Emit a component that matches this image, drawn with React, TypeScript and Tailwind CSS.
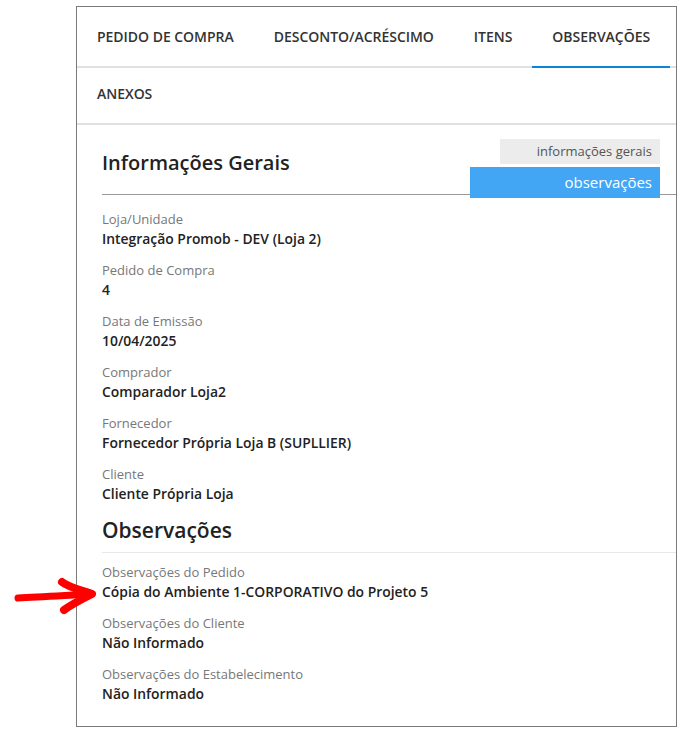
import type { ReactNode } from "react";

const TABS = [
  { label: "PEDIDO DE COMPRA", active: false },
  { label: "DESCONTO/ACRÉSCIMO", active: false },
  { label: "ITENS", active: false },
  { label: "OBSERVAÇÕES", active: true },
];

const GENERAL = [
  { label: "Loja/Unidade", value: "Integração Promob - DEV (Loja 2)" },
  { label: "Pedido de Compra", value: "4" },
  { label: "Data de Emissão", value: "10/04/2025" },
  { label: "Comprador", value: "Comparador Loja2" },
  { label: "Fornecedor", value: "Fornecedor Própria Loja B (SUPLLIER)" },
  { label: "Cliente", value: "Cliente Própria Loja" },
];

const NOTES = [
  { label: "Observações do Pedido", value: "Cópia do Ambiente 1-CORPORATIVO do Projeto 5" },
  { label: "Observações do Cliente", value: "Não Informado" },
  { label: "Observações do Estabelecimento", value: "Não Informado" },
];

function Tab({ children, active }: { children: ReactNode; active?: boolean }) {
  return (
    <button
      type="button"
      className={
        active
          ? "relative -mb-[2px] border-b-2 border-[#0a84d6] px-5 text-[14px] tracking-[-0.03px] font-semibold text-[#333]"
          : "px-5 text-[14px] tracking-[-0.03px] font-semibold text-[#333]"
      }
    >
      {children}
    </button>
  );
}

function Field({ label, value }: { label: string; value: string }) {
  return (
    <div className="mb-[13px] flex flex-col">
      <span className="text-[13px] leading-[19px] text-[#777]">{label}</span>
      <span className="text-[13.9px] leading-[19px] font-semibold text-[#222]">{value}</span>
    </div>
  );
}

function Arrow() {
  return (
    <svg
      className="pointer-events-none absolute left-[12px] top-[577px]"
      width="90"
      height="40"
      viewBox="0 0 90 40"
      fill="none"
    >
      <path d="M6 21 C 30 20, 60 18, 80 17" stroke="#ff0000" strokeWidth="7" strokeLinecap="round" />
      <path
        d="M50 5 C 56 10, 68 13, 80 17 C 70 22, 60 27, 52 33"
        stroke="#ff0000"
        strokeWidth="8"
        strokeLinecap="round"
        strokeLinejoin="round"
      />
    </svg>
  );
}

export default function App() {
  return (
    <div className="relative min-h-[730px] bg-white pt-[6px] font-['Open_Sans',sans-serif]">
      <div className="ml-[76px] flex h-[721px] w-[601px] flex-col border border-[#7a7a7a] bg-white">
        <div className="flex h-[61px] border-b-2 border-[#e0e0e0]">
          {TABS.map((t) => (
            <Tab key={t.label} active={t.active}>
              {t.label}
            </Tab>
          ))}
        </div>
        <div className="flex h-[57px] border-b-2 border-[#e0e0e0] pb-[4px]">
          <Tab>ANEXOS</Tab>
        </div>

        <div className="relative flex-1 pl-[25px]">
          <div className="absolute right-[16px] top-[14px] flex flex-col items-end gap-[3px]">
            <button
              type="button"
              className="h-[25px] w-[160px] bg-[#ececec] pr-[8px] text-right text-[13px] text-[#555]"
            >
              informações gerais
            </button>
            <button
              type="button"
              className="h-[31px] w-[190px] bg-[#42a6f5] pr-[8px] text-right text-[15px] text-white"
            >
              observações
            </button>
          </div>

          <h2 className="mt-[24px] text-[20px] leading-[28px] font-semibold text-[#222]">Informações Gerais</h2>
          <div className="mt-[17px] mb-[15px] border-b border-[#999]" />
          {GENERAL.map((f) => (
            <Field key={f.label} {...f} />
          ))}

          <h2 className="mt-[9px] text-[21px] leading-[28px] font-semibold text-[#222]">Observações</h2>
          <div className="mt-[8px] mb-[10px] border-b border-[#e8e8e8]" />
          {NOTES.map((f) => (
            <Field key={f.label} {...f} />
          ))}
        </div>
      </div>
      <Arrow />
    </div>
  );
}
